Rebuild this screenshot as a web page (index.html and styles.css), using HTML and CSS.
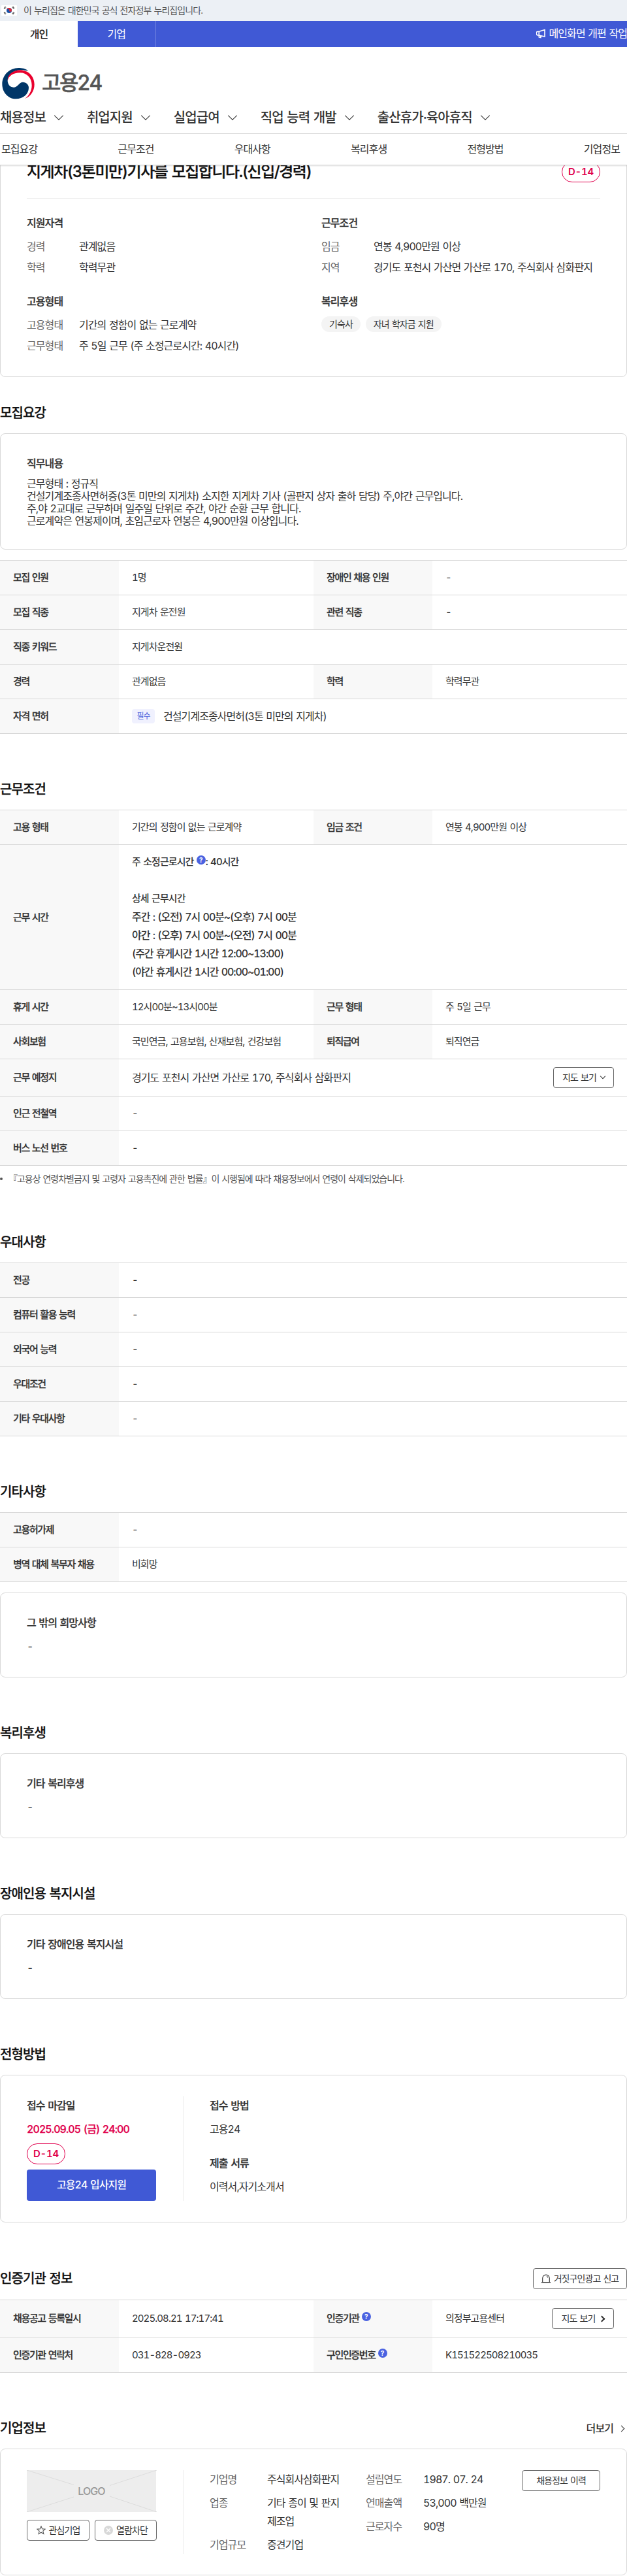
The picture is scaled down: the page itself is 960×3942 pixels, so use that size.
FILE: index.html
```html
<!DOCTYPE html>
<html lang="ko">
<head>
<meta charset="utf-8">
<title>고용24</title>
<link rel="stylesheet" href="styles.css">
</head>
<body>
<header class="header">
  <div class="gov">
    <svg class="flag" viewBox="0 0 24 16"><rect width="24" height="16" rx="1" fill="#fff"/><circle cx="12" cy="8" r="4" fill="#1450a8"/><path d="M8.1 7.2A4 4 0 0 1 16 8a2 2 0 0 1-4 0 2 2 0 0 0-3.9-.8z" fill="#d92c3a"/><g stroke="#333" stroke-width="2.4" stroke-dasharray="1 .4"><path d="M4.6 5.2l2-2.8M17.4 13.6l2-2.8M17.4 2.4l2 2.8M4.6 10.8l2 2.8"/></g></svg>
    <span>이 누리집은 대한민국 공식 전자정부 누리집입니다.</span>
  </div>
  <div class="topbar">
    <span class="tab on">개인</span><span class="tab">기업</span>
    <span class="notice"><svg width="14" height="15" viewBox="0 0 14 15" fill="none" stroke="#fff" stroke-width="1.6"><path d="M4.2 4.2L13 1.5v10.6L4.2 10H3a2.9 2.9 0 0 1 0-5.8zM4.2 4.2V10M4.3 10.2v2.6l2.6.6v-2.4"/></svg>메인화면 개편 작업</span>
  </div>
  <div class="brand">
    <svg width="54" height="50" viewBox="0 0 162 150"><path fill="#003668" d="M130 20C118 8 100 6 85 6C43 6 10 40 10 80c0 38 28 68 63 68c33 0 59-22 59-51c0-15-12-26-27-26c-17 0-23 24-43 24c-17 0-27-15-27-31C36 36 62 17 92 16c14-1 28 1 38 4z"/><path fill="#e9002d" d="M35 66C34 36 60 16 92 16c38 0 66 28 66 66c0 30-18 56-43 65c19-15 31-37 31-61c0-34-22-58-54-58c-32 0-54 16-57 38z"/></svg>
    <span class="brandname">고용24</span>
  </div>
  <nav class="gnb">
    <span>채용정보<i class="chev"></i></span><span>취업지원<i class="chev"></i></span><span>실업급여<i class="chev"></i></span><span>직업 능력 개발<i class="chev"></i></span><span>출산휴가·육아휴직<i class="chev"></i></span>
  </nav>
  <nav class="anchors"><span>모집요강</span><span>근무조건</span><span>우대사항</span><span>복리후생</span><span>전형방법</span><span>기업정보</span></nav>
</header>

<main>
<section class="card summary">
  <div class="summary-head"><h1>지게차(3톤미만)기사를 모집합니다.(신입/경력)</h1><span class="dday">D-14</span></div>
  <div class="summary-grid">
    <div><h3>지원자격</h3><dl><dt>경력</dt><dd>관계없음</dd><dt>학력</dt><dd>학력무관</dd></dl></div>
    <div><h3>근무조건</h3><dl><dt>임금</dt><dd>연봉 4,900만원 이상</dd><dt>지역</dt><dd>경기도 포천시 가산면 가산로 170, 주식회사 삼화판지</dd></dl></div>
    <div><h3>고용형태</h3><dl><dt>고용형태</dt><dd>기간의 정함이 없는 근로계약</dd><dt>근무형태</dt><dd>주 5일 근무 (주 소정근로시간: 40시간)</dd></dl></div>
    <div><h3>복리후생</h3><div class="chips"><span>기숙사</span><span>자녀 학자금 지원</span></div></div>
  </div>
</section>

<section class="sec first">
  <h2>모집요강</h2>
  <div class="card plain"><h3>직무내용</h3><p class="desc">근무형태 : 정규직<br>건설기계조종사면허증(3톤 미만의 지게차) 소지한 지게차 기사 (골판지 상자 출하 담당) 주,야간 근무입니다.<br>주,야 2교대로 근무하며 일주일 단위로 주간, 야간 순환 근무 합니다.<br>근로계약은 연봉제이며, 초임근로자 연봉은 4,900만원 이상입니다.</p></div>
  <table class="gap">
    <tr><th>모집 인원</th><td>1명</td><th>장애인 채용 인원</th><td>-</td></tr>
    <tr><th>모집 직종</th><td>지게차 운전원</td><th>관련 직종</th><td>-</td></tr>
    <tr><th>직종 키워드</th><td colspan="3">지게차운전원</td></tr>
    <tr><th>경력</th><td>관계없음</td><th>학력</th><td>학력무관</td></tr>
    <tr><th>자격 면허</th><td colspan="3"><div class="license"><span class="must">필수</span><span class="big">건설기계조종사면허(3톤 미만의 지게차)</span></div></td></tr>
  </table>
</section>

<section class="sec">
  <h2>근무조건</h2>
  <table>
    <tr><th>고용 형태</th><td>기간의 정함이 없는 근로계약</td><th>임금 조건</th><td>연봉 4,900만원 이상</td></tr>
    <tr><th>근무 시간</th><td colspan="3" class="hours"><p class="weekly">주 소정근로시간 <span class="help">?</span>: 40시간</p><br>상세 근무시간<p class="big times">주간 : (오전) 7시 00분~(오후) 7시 00분<br>야간 : (오후) 7시 00분~(오전) 7시 00분<br>(주간 휴게시간 1시간 12:00~13:00)<br>(야간 휴게시간 1시간 00:00~01:00)</p></td></tr>
    <tr><th>휴게 시간</th><td>12시00분~13시00분</td><th>근무 형태</th><td>주 5일 근무</td></tr>
    <tr><th>사회보험</th><td>국민연금, 고용보험, 산재보험, 건강보험</td><th>퇴직급여</th><td>퇴직연금</td></tr>
    <tr class="tall"><th>근무 예정지</th><td colspan="3"><div class="between"><span class="big">경기도 포천시 가산면 가산로 170, 주식회사 삼화판지</span><span class="btn map">지도 보기<i class="chev small"></i></span></div></td></tr>
    <tr><th>인근 전철역</th><td colspan="3">-</td></tr>
    <tr><th>버스 노선 번호</th><td colspan="3">-</td></tr>
  </table>
  <p class="note">『고용상 연령차별금지 및 고령자 고용촉진에 관한 법률』이 시행됨에 따라 채용정보에서 연령이 삭제되었습니다.</p>
</section>

<section class="sec">
  <h2>우대사항</h2>
  <table>
    <tr><th>전공</th><td colspan="3">-</td></tr>
    <tr><th>컴퓨터 활용 능력</th><td colspan="3">-</td></tr>
    <tr><th>외국어 능력</th><td colspan="3">-</td></tr>
    <tr><th>우대조건</th><td colspan="3">-</td></tr>
    <tr><th>기타 우대사항</th><td colspan="3">-</td></tr>
  </table>
</section>

<section class="sec">
  <h2>기타사항</h2>
  <table>
    <tr><th>고용허가제</th><td colspan="3">-</td></tr>
    <tr><th>병역 대체 복무자 채용</th><td colspan="3">비희망</td></tr>
  </table>
  <div class="card plain gap"><h3>그 밖의 희망사항</h3><p>-</p></div>
</section>

<section class="sec"><h2>복리후생</h2><div class="card plain"><h3>기타 복리후생</h3><p>-</p></div></section>
<section class="sec"><h2>장애인용 복지시설</h2><div class="card plain"><h3>기타 장애인용 복지시설</h3><p>-</p></div></section>

<section class="sec">
  <h2>전형방법</h2>
  <div class="card split">
    <div class="side"><h3>접수 마감일</h3><p class="due">2025.09.05 (금) 24:00</p><span class="dday">D-14</span><span class="apply">고용24 입사지원</span></div>
    <div class="rest"><h3>접수 방법</h3><p>고용24</p><h3 class="docs">제출 서류</h3><p>이력서,자기소개서</p></div>
  </div>
</section>

<section class="sec">
  <div class="sec-head"><h2>인증기관 정보</h2><span class="btn report"><svg width="14" height="14" viewBox="0 0 14 14" fill="none" stroke="#333" stroke-width="1.1"><path d="M0 12.6h14M1.7 12.6V6.4a5.3 5.3 0 0 1 10.6 0v6.2M8 3.4a3 3 0 0 1 1.9 1.9"/></svg>거짓구인광고 신고</span></div>
  <table>
    <tr class="tall"><th>채용공고 등록일시</th><td>2025.08.21 17:17:41</td><th>인증기관 <span class="help">?</span></th><td><div class="between"><span>의정부고용센터</span><span class="btn map2">지도 보기<i class="arrow bold"></i></span></div></td></tr>
    <tr class="mid"><th>인증기관 연락처</th><td>031-828-0923</td><th>구인인증번호 <span class="help">?</span></th><td>K151522508210035</td></tr>
  </table>
</section>

<section class="sec">
  <div class="sec-head low"><h2>기업정보</h2><span class="more">더보기<i class="arrow"></i></span></div>
  <div class="card split company">
    <div class="side">
      <div class="logo"><svg width="199" height="64" viewBox="0 0 199 64" stroke="#dcdcdc"><path d="M0 0l72 22.5M199 0l-72 23.5M0 64l72-23M199 64l-72-24"/></svg><span>LOGO</span></div>
      <div class="btns"><span class="btn"><svg width="14" height="14" viewBox="0 0 14 14" fill="none" stroke="#555" stroke-width="1.1"><path d="M7 .9l1.7 4 4.4.4-3.3 2.9 1 4.3L7 10.2l-3.8 2.3 1-4.3L.9 5.3l4.4-.4z"/></svg>관심기업</span><span class="btn"><svg width="14" height="14" viewBox="0 0 14 14"><circle cx="7" cy="7" r="7" fill="#d8d8d8"/><path d="M4 4l6 6M10 4l-6 6" stroke="#fff" stroke-width="1.4"/></svg>열람차단</span></div>
    </div>
    <div class="rest cols">
      <dl class="c1"><dt>기업명</dt><dd>주식회사삼화판지</dd><dt>업종</dt><dd>기타 종이 및 판지 제조업</dd><dt>기업규모</dt><dd>중견기업</dd></dl>
      <dl class="c2"><dt>설립연도</dt><dd>1987. 07. 24</dd><dt>연매출액</dt><dd>53,000 백만원</dd><dt>근로자수</dt><dd>90명</dd></dl>
      <span class="btn history">채용정보 이력</span>
    </div>
  </div>
</section>
</main>
</body>
</html>
```

FILE: styles.css
```css
* { box-sizing: border-box; margin: 0; padding: 0; }
body { font-family: Inter, "Noto Sans CJK KR", sans-serif; font-size: 16px; font-variant-numeric: tabular-nums; line-height: 28px; letter-spacing: -0.058em; word-spacing: 0.075em; color: #333; background: #fff; overflow-x: hidden; }
i { font-style: normal; }
svg { flex: none; }
h1, h2, h3 { font-weight: 500; -webkit-text-stroke: 0.25px currentColor; }
h2 { font-size: 20px; line-height: 30px; padding-bottom: 16px; color: #111; }
h3 { font-size: 16px; margin-bottom: 8px; }

.header { position: relative; z-index: 2; background: #fff; height: 253px; border-bottom: 1px solid #d6d6d6; box-shadow: 0 1px 2px rgba(0,0,0,.12); }
.gov { height: 32px; background: #ecf0f5; display: flex; align-items: center; gap: 10px; padding-left: 2px; font-size: 14px; color: #555; }
.flag { width: 24px; height: 16px; }
.topbar { height: 40px; background: #4059d5; display: flex; color: #fff; line-height: 40px; overflow: hidden; }
.tab { width: 120px; text-align: center; border-right: 1px solid #6f82e0; }
.tab.on { background: #fff; color: #222; font-weight: 500; border: 0; }
.notice { margin-left: 582px; display: flex; align-items: center; gap: 6px; white-space: nowrap; line-height: 36px; height: 38px; }
.brand { height: 84px; padding: 25px 0 0; display: flex; gap: 10px; align-items: center; }
.brandname { font-size: 32px; line-height: 48px; font-weight: 500; -webkit-text-stroke: 0.4px currentColor; letter-spacing: -2.4px; color: #555; }
.gnb { height: 49px; display: flex; gap: 36px; font-size: 20px; font-weight: 500; line-height: 48px; border-bottom: 1px solid #d8d8d8; white-space: nowrap; }
.gnb span { display: flex; align-items: center; }
.chev { width: 10px; height: 10px; border: solid #333; border-width: 0 1.3px 1.3px 0; transform: rotate(45deg); margin: -7px 2px 0 15px; }
.chev.small { width: 6px; height: 6px; margin: -4px 0 0 7px; }
.anchors { height: 47px; display: flex; justify-content: space-between; padding: 0 11px 0 2px; line-height: 46px; }

.card { border: 1px solid #d8d8d8; border-radius: 8px; padding: 32px 40px; }
.card.plain { padding: 31px 40px 33px; }
.card.summary { margin-top: -40px; padding: 30px 40px 33px; }
.summary-head { display: flex; justify-content: space-between; border-bottom: 1px solid #ececec; height: 60px; margin-bottom: 23px; }
h1 { font-size: 24px; line-height: 37px; letter-spacing: -0.061em; color: #111; white-space: nowrap; }
.dday { display: block; width: 59px; height: 32px; border: 1px solid #e0004d; border-radius: 16px; color: #e0004d; font-size: 15px; font-weight: 600; line-height: 30px; text-align: center; letter-spacing: -0.2px; }
.summary-head .dday { margin-top: 3px; }
.summary-grid { display: grid; grid-template-columns: 451px 1fr; row-gap: 24px; height: 216px; }
dl { display: grid; grid-template-columns: 80px 1fr; row-gap: 4px; }
dt { color: #666; }
dd { white-space: nowrap; }
.chips { display: flex; gap: 8px; padding-top: 1px; }
.chips span { height: 24px; line-height: 23px; padding: 0 12px; border-radius: 12px; background: #f4f4f4; font-size: 14px; }

.sec { margin-top: 70px; }
.sec.first { margin-top: 40px; }
.gap { margin-top: 16px; }
.desc { line-height: 19px; }
.sec-head { display: flex; justify-content: space-between; height: 48px; }
.sec-head h2 { line-height: 32px; }
.sec-head.low { height: 46px; }
.sec-head.low h2 { line-height: 30px; }

table { width: 100%; table-layout: fixed; border-collapse: separate; border-spacing: 0; border-top: 1px solid #d8d8d8; font-size: 15px; line-height: 24px; }
th, td { height: 53px; padding: 0 20px; border-bottom: 1px solid #d8d8d8; text-align: left; font-weight: 400; vertical-align: middle; white-space: nowrap; }
th { width: 182px; background: #f8f8f8; font-weight: 500; -webkit-text-stroke: 0.25px currentColor; letter-spacing: -0.09em; }
.tall > * { height: 57px; }
.mid > * { height: 54px; }
td.hours { padding: 12px 20px 13px; line-height: 28px; font-weight: 500; }
.weekly { height: 28px; }
.big { font-size: 16px; }
.times { letter-spacing: -0.068em; }
.license { display: flex; align-items: center; gap: 13px; }
.must { width: 35px; height: 22px; line-height: 22px; text-align: center; background: #f0f1fe; color: #5066dc; border-radius: 4px; font-size: 12px; }
.help { display: inline-block; width: 14px; height: 14px; border-radius: 50%; background: #4a62e0; color: #fff; font-size: 10px; line-height: 14px; font-weight: 700; text-align: center; letter-spacing: 0; vertical-align: 4px; -webkit-text-stroke: 0; }
.between { display: flex; justify-content: space-between; align-items: center; }
.btn { display: flex; align-items: center; justify-content: center; height: 32px; border: 1px solid #666; border-radius: 4px; font-size: 14px; gap: 5px; white-space: nowrap; background: #fff; line-height: 30px; }
.btn.map { width: 93px; gap: 0; }
.btn.map2 { width: 95px; gap: 0; }
.btn.report { width: 144px; }
.arrow { width: 7px; height: 7px; border: solid #333; border-width: 1.4px 1.4px 0 0; transform: rotate(45deg); margin-left: 7px; }
.arrow.bold { border-width: 2px 2px 0 0; }
.note { margin-top: 8px; height: 24px; line-height: 24px; font-size: 14px; letter-spacing: -0.073em; color: #555; display: flex; align-items: center; gap: 9px; }
.note::before { content: ""; width: 4px; height: 4px; border-radius: 50%; background: #555; }

.split { display: flex; }
.side { width: 240px; padding-right: 41px; border-right: 1px solid #ececec; }
.rest { padding-left: 40px; flex: 1; }
.due { color: #e0004d; font-weight: 500; -webkit-text-stroke: 0.25px currentColor; margin-bottom: 8px; }
.apply { display: block; margin-top: 8px; height: 48px; line-height: 47px; background: #4059d5; color: #fff; font-weight: 500; text-align: center; border-radius: 4px; }
.docs { margin-top: 24px; }
.more { font-weight: 500; line-height: 30px; height: 30px; display: flex; align-items: center; padding-right: 7px; }
.more .arrow { margin-left: 9px; margin-right: -2px; }
.company { height: 194px; }
.logo { position: relative; height: 64px; background: #ededed; color: #999; text-align: center; }
.logo svg { display: block; }
.logo span { position: absolute; inset: 0; line-height: 64px; font-weight: 500; }
.btns { display: grid; grid-template-columns: 96px 95px; gap: 8px; margin-top: 12px; }
.cols { display: flex; }
.cols dl { grid-template-columns: 88px 1fr; row-gap: 8px; align-content: start; }
.c1 { width: 199px; }
.c1 dd { white-space: normal; }
.c2 { width: 180px; margin-left: 40px; }
.history { width: 120px; margin-left: auto; }
```
